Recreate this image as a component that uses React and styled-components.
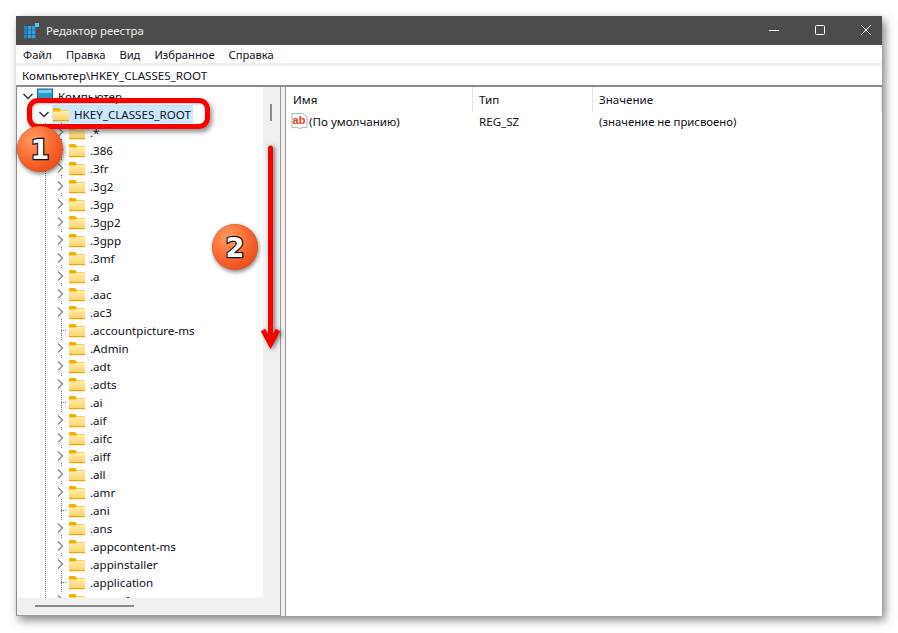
import React from 'react'
import styled, { createGlobalStyle } from 'styled-components'

const GlobalStyle = createGlobalStyle`
  html, body {
    margin: 0;
    padding: 0;
    background: #ffffff;
  }
  * {
    box-sizing: border-box;
  }
`

const Page = styled.div`
  width: 898px;
  height: 633px;
  padding: 16px;
  overflow: hidden;
  font-family: "Noto Sans", "Open Sans", sans-serif;
  font-size: 11.6px;
  color: #101018;
`

const Window = styled.div`
  position: relative;
  width: 866px;
  height: 600px;
  display: flex;
  flex-direction: column;
  background: #f0f0f0;
  box-shadow: 3px 4px 9px rgba(0, 0, 0, 0.5);
`

const TitleBar = styled.div`
  height: 29px;
  flex: none;
  display: flex;
  align-items: center;
  padding: 0 11px 0 7px;
  background: #4d4c4a;
  color: #ececec;
`

const TitleText = styled.span`
  margin-left: 7px;
  font-size: 11.4px;
  flex: 1;
`

const Controls = styled.div`
  display: flex;
  gap: 36px;
  align-items: center;
  margin-top: -2px;
`

const MenuBar = styled.div`
  height: 18px;
  flex: none;
  display: flex;
  gap: 14px;
  align-items: center;
  padding-left: 7px;
  background: #ffffff;
`

const MenuItem = styled.span`
  font-size: 11.2px;
`

const AddressBar = styled.div`
  height: 19px;
  flex: none;
  margin-top: 3px;
  padding-left: 6px;
  display: flex;
  align-items: center;
  background: #ffffff;
`

const Panes = styled.div`
  flex: 1;
  min-height: 0;
  display: flex;
  border-top: 2px solid #8c8c8c;
  border-left: 1px solid #8c8c8c;
  background: #f0f0f0;
`

const LeftPane = styled.div`
  width: 264px;
  flex: none;
  display: flex;
  flex-direction: column;
  border-right: 1px solid #9a9a9a;
  border-bottom: 1px solid #9a9a9a;
`

const LeftBody = styled.div`
  flex: 1;
  min-height: 0;
  display: flex;
`

const Tree = styled.div`
  flex: 1;
  min-width: 0;
  overflow: hidden;
  background: #ffffff;
`

const ChildList = styled.div`
  background: repeating-linear-gradient(to bottom, #777 0 1px, transparent 1px 2px) 28px 0 / 1px 100% no-repeat;
`

const VScroll = styled.div`
  width: 17px;
  flex: none;
  padding: 17px 0 0 7px;
  background: #f0f0f0;
`

const VThumb = styled.div`
  width: 2px;
  height: 17px;
  background: #8a8a8a;
`

const HScroll = styled.div`
  height: 17px;
  flex: none;
  padding: 7px 0 0 18px;
  background: #f0f0f0;
`

const HThumb = styled.div`
  width: 99px;
  height: 2px;
  background: #8a8a8a;
`

const Splitter = styled.div`
  width: 5px;
  flex: none;
  border-right: 1px solid #9a9a9a;
`

const Row = styled.div`
  height: 18px;
  display: flex;
  align-items: center;
  padding-left: ${(p) => p.$depth * 16 + 4}px;
`

const Expander = styled.div`
  width: 14px;
  height: 18px;
  flex: none;
  margin-right: 2px;
  display: flex;
  align-items: center;
  justify-content: center;
  background:
    ${(p) =>
      p.$leaf
        ? 'repeating-linear-gradient(to right, #777 0 1px, transparent 1px 2px) 8px 9px / 8px 1px no-repeat,'
        : ''}
    ${(p) =>
      p.$bare
        ? 'none'
        : 'repeating-linear-gradient(to bottom, #777 0 1px, transparent 1px 2px) 8px 0 / 1px 100% no-repeat'};
`

const Chevron = styled.svg`
  display: block;
  background: #ffffff;
  width: 14px;
  height: 14px;
`

const Label = styled.span`
  margin-left: ${(p) => (p.$selected ? '0' : '5px')};
  white-space: nowrap;
`

const SelectedBox = styled.div`
  display: flex;
  align-items: center;
  height: 18px;
  width: 141px;
  margin-left: -1px;
  padding-left: 1px;
  gap: 5px;
  background: #cce8ff;
`

const RightPane = styled.div`
  flex: 1;
  min-width: 0;
  background: #ffffff;
`

const ListHeader = styled.div`
  height: 25px;
  display: grid;
  grid-template-columns: 187px 120px 1fr;
`

const HeaderCell = styled.div`
  display: flex;
  align-items: center;
  padding-left: 6px;
  border-right: 1px solid #e5e5e5;

  &:first-child {
    padding-left: 7px;
  }
`

const ListRow = styled.div`
  height: 19px;
  display: grid;
  grid-template-columns: 187px 120px 1fr;
  align-items: center;
`

const NameCell = styled.div`
  display: flex;
  align-items: center;
  gap: 1px;
  padding-left: 5px;
`

const ValueCell = styled.div`
  padding-left: 6px;
  font-size: ${(p) => p.$size || 11.6}px;
`

const Frame = styled.div`
  position: absolute;
  left: 11px;
  top: 82px;
  width: 183px;
  height: 31px;
  border: 5px solid #f80000;
  border-radius: 11px;
  box-shadow: 2px 3px 5px rgba(0, 0, 0, 0.45), inset 1px 1px 3px rgba(0, 0, 0, 0.25);
`

const Badge = styled.div`
  position: absolute;
  left: ${(p) => p.$x}px;
  top: ${(p) => p.$y}px;
  width: 46px;
  height: 46px;
  border-radius: 50%;
  display: flex;
  align-items: center;
  justify-content: center;
  background: radial-gradient(circle at 35% 30%, #ff9d62 0%, #f96a32 45%, #dd3c10 100%);
  box-shadow: 1px 2px 4px rgba(0, 0, 0, 0.5), inset 0 0 1px #9a2a08;
  color: #ffffff;
  font-family: "DejaVu Sans", sans-serif;
  font-weight: 700;
  font-size: 27px;
  -webkit-text-stroke: 2.5px #111111;
  paint-order: stroke fill;
`

const ArrowMark = styled.svg`
  position: absolute;
  left: 240px;
  top: 128px;
  filter: drop-shadow(2px 1px 2px rgba(0, 0, 0, 0.5));
`

const names = [
  '.*', '.386', '.3fr', '.3g2', '.3gp', '.3gp2', '.3gpp', '.3mf', '.a', '.aac', '.ac3',
  '.accountpicture-ms', '.Admin', '.adt', '.adts', '.ai', '.aif', '.aifc', '.aiff', '.all',
  '.amr', '.ani', '.ans', '.appcontent-ms', '.appinstaller', '.application', '.appref-ms',
]
const leaves = ['.accountpicture-ms', '.ai', '.ani', '.application']

const AppIcon = () => (
  <svg width="16" height="16" viewBox="0 0 16 16">
    <rect x="12" y="0" width="4" height="4" fill="#5cc2f2" />
    {[0, 1, 2].map((r) =>
      [0, 1, 2].map((c) =>
        r === 0 && c === 2 ? null : (
          <rect key={`${r}${c}`} x={1 + c * 4} y={3 + r * 4.3} width="3.4" height="3.7" fill={c === 0 ? '#1687cf' : '#2aa3e4'} />
        )
      )
    )}
    <rect x="9" y="3" width="3.4" height="3.7" fill="#2aa3e4" />
  </svg>
)

const ChevronIcon = ({ down, dark }) => (
  <Chevron viewBox="0 0 14 14">
    <path
      d={down ? 'M2.5 5 L7 9.5 L11.5 5' : 'M5 2.5 L9.5 7 L5 11.5'}
      fill="none"
      stroke={dark ? '#333333' : '#8f8f8f'}
      strokeWidth="1.5"
    />
  </Chevron>
)

const Folder = () => (
  <svg width="16" height="15" viewBox="0 0 16 15" style={{ flex: 'none' }}>
    <defs>
      <linearGradient id="folderBody" x1="0" y1="0" x2="0" y2="1">
        <stop offset="0" stopColor="#fff0b4" />
        <stop offset="1" stopColor="#fbd166" />
      </linearGradient>
    </defs>
    <path d="M0 2 Q0 1 1 1 H6 L8 3 H15 Q16 3 16 4 V6 H0 Z" fill="#f2b200" />
    <path d="M0 4.5 H6.5 L8 3.5 H16 V14 H0 Z" fill="url(#folderBody)" />
    <rect x="0" y="13" width="16" height="1.2" fill="#e8a80a" />
  </svg>
)

const ComputerIcon = () => (
  <svg width="16" height="16" viewBox="0 0 16 16" style={{ flex: 'none' }}>
    <rect x="0.5" y="1" width="15" height="10" fill="#2f9ccf" stroke="#1c6f9a" />
    <rect x="1.5" y="2" width="13" height="3" fill="#79cdea" />
    <rect x="6" y="11" width="4" height="2" fill="#9a9a9a" />
    <rect x="3" y="13" width="10" height="1.5" fill="#c2c2c2" />
  </svg>
)

const StringIcon = () => (
  <svg width="17" height="17" viewBox="0 0 17 17" style={{ flex: 'none' }}>
    <path d="M1 0.5 H12 L16 4 V15 L13 14 L9 15.5 L5 14 L1 15 Z" fill="#ffffff" stroke="#b5b5b5" />
    <text x="1.6" y="11" fontFamily="Liberation Sans, sans-serif" fontWeight="700" fontSize="11" fill="#d8401c">ab</text>
  </svg>
)

const MinimizeIcon = () => (
  <svg width="10" height="10" viewBox="0 0 10 10">
    <path d="M0 5.5 H10" stroke="#ffffff" strokeWidth="1" />
  </svg>
)

const MaximizeIcon = () => (
  <svg width="10" height="10" viewBox="0 0 10 10">
    <rect x="0.5" y="0.5" width="9" height="9" rx="1" fill="none" stroke="#ffffff" />
  </svg>
)

const CloseIcon = () => (
  <svg width="10" height="10" viewBox="0 0 10 10">
    <path d="M0 0 L10 10 M10 0 L0 10" stroke="#ffffff" strokeWidth="1" />
  </svg>
)

const App = () => {
  return (
    <Page>
      <GlobalStyle />
      <Window>
        <TitleBar>
          <AppIcon />
          <TitleText>Редактор реестра</TitleText>
          <Controls>
            <MinimizeIcon />
            <MaximizeIcon />
            <CloseIcon />
          </Controls>
        </TitleBar>

        <MenuBar>
          {['Файл', 'Правка', 'Вид', 'Избранное', 'Справка'].map((item) => (
            <MenuItem key={item}>{item}</MenuItem>
          ))}
        </MenuBar>

        <AddressBar>Компьютер\HKEY_CLASSES_ROOT</AddressBar>

        <Panes>
          <LeftPane>
            <LeftBody>
              <Tree>
                <Row $depth={0}>
                  <Expander $bare>
                    <ChevronIcon down dark />
                  </Expander>
                  <ComputerIcon />
                  <Label>Компьютер</Label>
                </Row>
                <Row $depth={1}>
                  <Expander $bare>
                    <ChevronIcon down dark />
                  </Expander>
                  <SelectedBox>
                    <Folder />
                    <Label $selected>HKEY_CLASSES_ROOT</Label>
                  </SelectedBox>
                </Row>
                <ChildList>
                  {names.map((name) => {
                    const leaf = leaves.includes(name)
                    return (
                      <Row $depth={2} key={name}>
                        <Expander $leaf={leaf}>{!leaf && <ChevronIcon />}</Expander>
                        <Folder />
                        <Label>{name}</Label>
                      </Row>
                    )
                  })}
                </ChildList>
              </Tree>
              <VScroll>
                <VThumb />
              </VScroll>
            </LeftBody>
            <HScroll>
              <HThumb />
            </HScroll>
          </LeftPane>

          <Splitter />

          <RightPane>
            <ListHeader>
              <HeaderCell>Имя</HeaderCell>
              <HeaderCell>Тип</HeaderCell>
              <HeaderCell>Значение</HeaderCell>
            </ListHeader>
            <ListRow>
              <NameCell>
                <StringIcon />
                (По умолчанию)
              </NameCell>
              <ValueCell>REG_SZ</ValueCell>
              <ValueCell $size={11.35}>(значение не присвоено)</ValueCell>
            </ListRow>
          </RightPane>
        </Panes>

        <Frame />
        <Badge $x={1} $y={110}>1</Badge>
        <Badge $x={196} $y={208}>2</Badge>
        <ArrowMark width="30" height="210" viewBox="0 0 30 210">
          <path d="M14.5 4 V198" stroke="#fb0000" strokeWidth="5" strokeLinecap="round" fill="none" />
          <path d="M7 186 L14.5 200 L22 186" stroke="#fb0000" strokeWidth="5" strokeLinejoin="miter" fill="none" />
        </ArrowMark>
      </Window>
    </Page>
  )
}

export default App
